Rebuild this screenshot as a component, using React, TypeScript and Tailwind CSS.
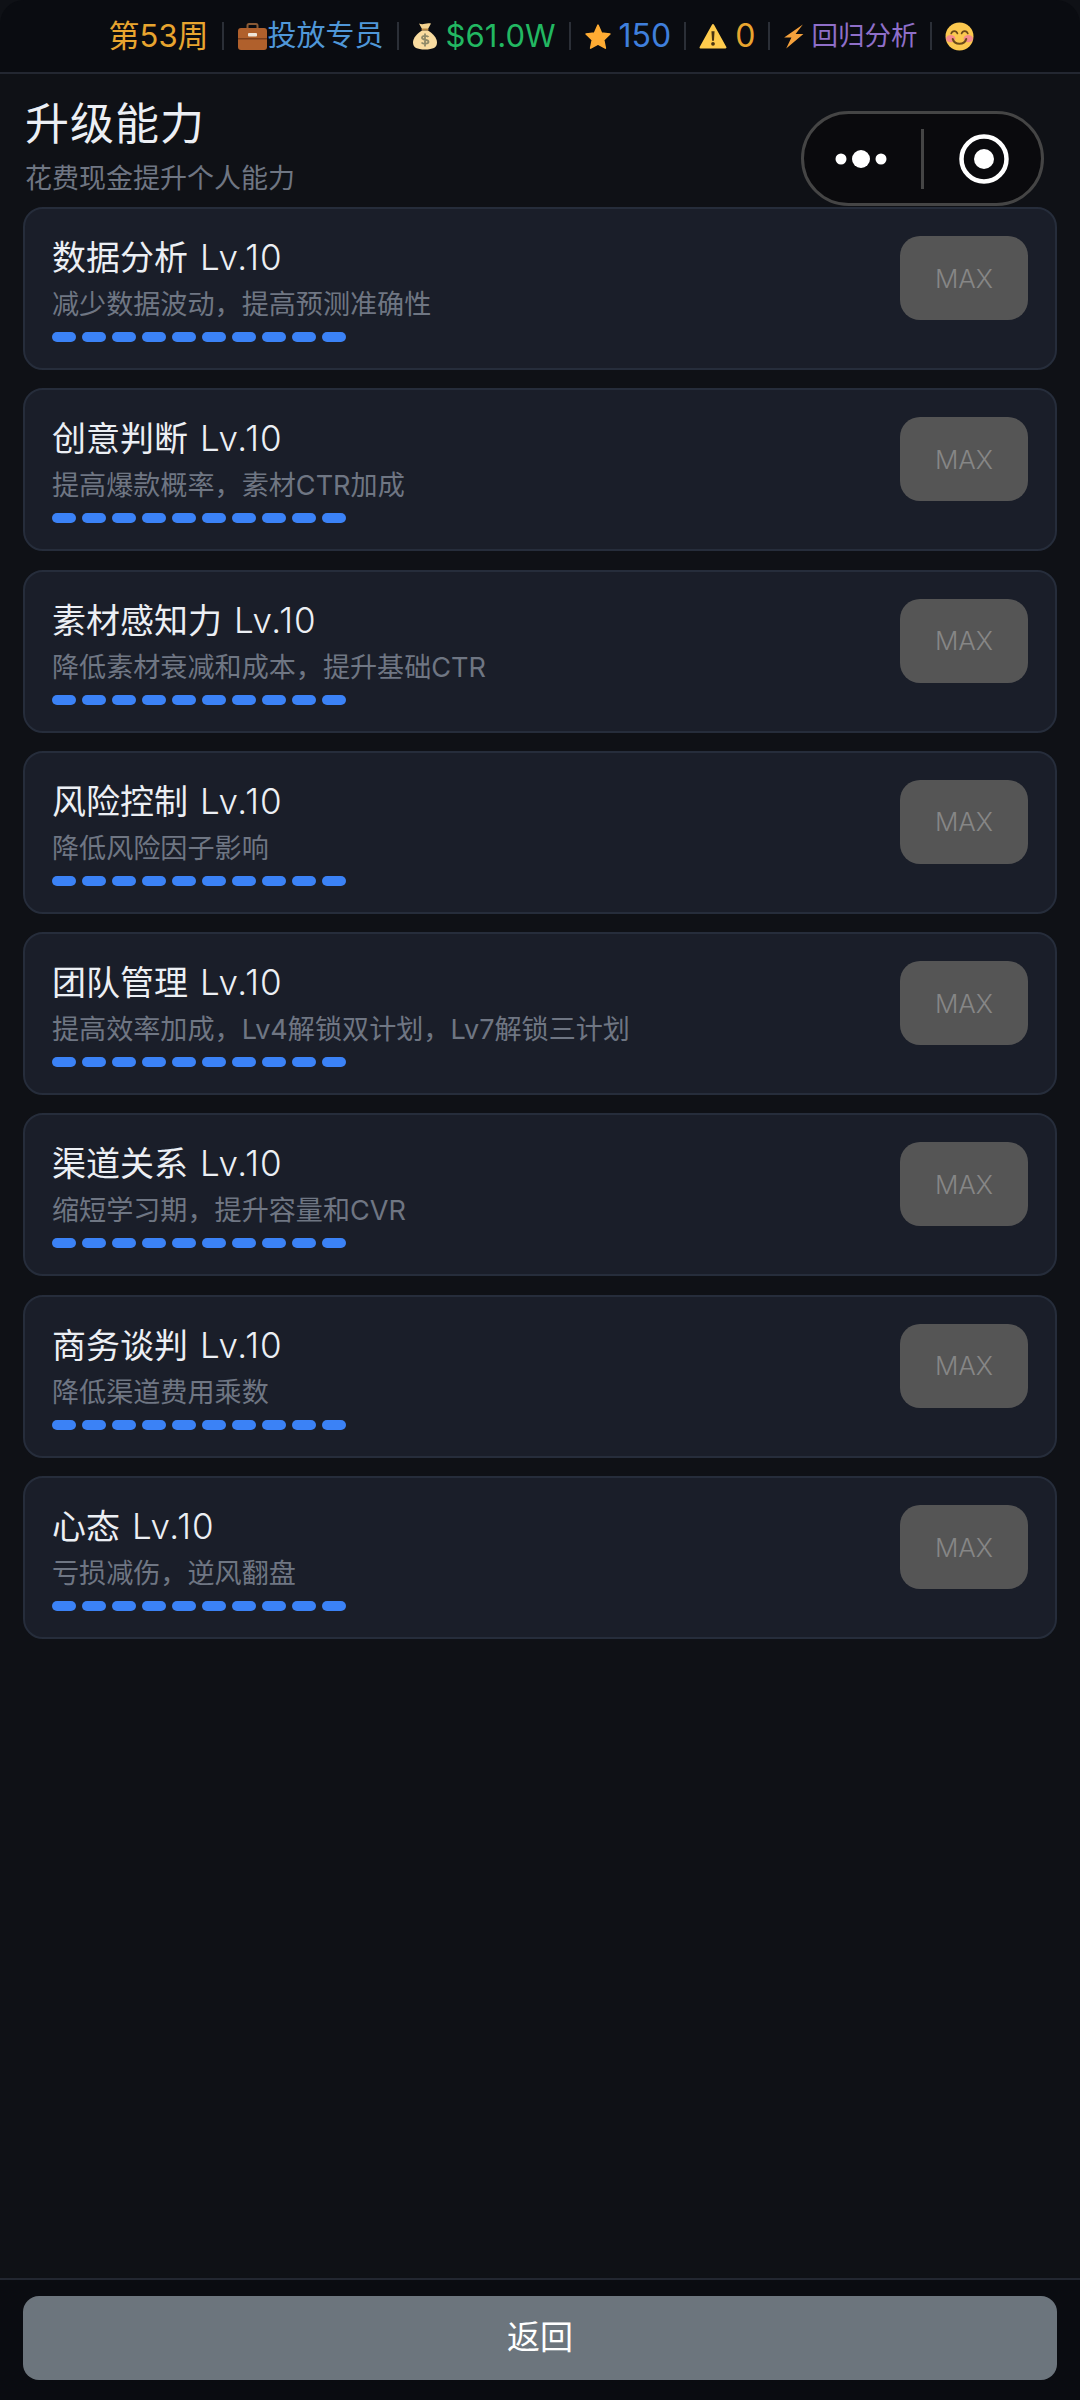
const skills = [
  { name: "数据分析", desc: "减少数据波动，提高预测准确性" },
  { name: "创意判断", desc: "提高爆款概率，素材CTR加成" },
  { name: "素材感知力", desc: "降低素材衰减和成本，提升基础CTR" },
  { name: "风险控制", desc: "降低风险因子影响" },
  { name: "团队管理", desc: "提高效率加成，Lv4解锁双计划，Lv7解锁三计划" },
  { name: "渠道关系", desc: "缩短学习期，提升容量和CVR" },
  { name: "商务谈判", desc: "降低渠道费用乘数" },
  { name: "心态", desc: "亏损减伤，逆风翻盘" },
];

const segments = [0, 1, 2, 3, 4, 5, 6, 7, 8, 9];

function Divider() {
  return <span className="h-[28px] w-[2px] shrink-0 bg-[#2b2f37]" />;
}

function Briefcase() {
  return (
    <svg width="31" height="30" viewBox="0 0 30 30" className="shrink-0">
      <path d="M10 8V4.500A1.500 1.500 0 0 1 11.500 3h7A1.500 1.500 0 0 1 20 4.500V8" fill="none" stroke="#8a5a35" strokeWidth="2" />
      <rect x="0.500" y="7" width="29" height="22" rx="3" fill="#b0602c" />
      <rect x="0.500" y="17" width="29" height="1.500" fill="#7c3f1c" />
      <rect x="10.500" y="12" width="9" height="3.500" rx="1" fill="#efe6da" />
    </svg>
  );
}

function MoneyBag() {
  return (
    <svg width="26" height="28" viewBox="0 0 26 28" className="shrink-0">
      <path d="M7 1.500c2 1 4 1 6 .3 2-.7 4-.7 6-.3l-3 5.500h-6z" fill="#f5d490" />
      <rect x="9.500" y="6.500" width="7" height="2" rx="1" fill="#b5853f" />
      <path d="M10 8.500h6C21 11.500 25 16 25 20.500c0 5-4 7-12 7s-12-2-12-7C1 16 5 11.500 10 8.500z" fill="#f9dca0" />
      <path d="M16.500 15c-1-1.500-6.500-1.700-6.500.8 0 2.700 6.500 1.200 6.500 4 0 2.500-5.500 2.400-7 .7M13 11.500v13" fill="none" stroke="#8f8a68" strokeWidth="1.800" />
    </svg>
  );
}

function Star() {
  return (
    <svg width="28" height="27" viewBox="0 0 27 26" className="shrink-0">
      <path
        d="M13.500 2l3.400 7.600 8.100 1-6 5.600 1.600 8-7.100-4-7.100 4 1.600-8-6-5.600 8.100-1z"
        fill="#ffac33"
        stroke="#ffac33"
        strokeWidth="1.500"
        strokeLinejoin="round"
      />
    </svg>
  );
}

function Warning() {
  return (
    <svg width="28" height="26" viewBox="0 0 27 25" className="shrink-0">
      <path d="M13.500 2L25.500 23.500H1.500z" fill="#ffcc4d" stroke="#ffcc4d" strokeLinejoin="round" strokeWidth="2" />
      <path d="M12 8h3l-.6 9h-1.800z" fill="#4a3512" />
      <circle cx="13.500" cy="20" r="1.800" fill="#4a3512" />
    </svg>
  );
}

function Bolt() {
  return (
    <svg width="21" height="25" viewBox="0 0 20 24" className="shrink-0">
      <path d="M19 0.500L1 13h7L3 23.500 19.500 9.500H12z" fill="#f5a13c" />
    </svg>
  );
}

function Smiley() {
  return (
    <svg width="29" height="29" viewBox="0 0 28 28" className="shrink-0">
      <circle cx="14" cy="14" r="13.500" fill="#fbc84f" />
      <ellipse cx="5.500" cy="16" rx="4.500" ry="3.500" fill="#f58c8c" />
      <ellipse cx="22.500" cy="16" rx="4.500" ry="3.500" fill="#f58c8c" />
      <path d="M6 11c1-3 5-3 6 0M16 11c1-3 5-3 6 0" fill="none" stroke="#6b4a1a" strokeWidth="1.600" strokeLinecap="round" />
      <path d="M7.500 16.500c2 6 11 6 13 0" fill="none" stroke="#6b4a1a" strokeWidth="2" strokeLinecap="round" />
    </svg>
  );
}

function SkillCard({ name, desc }: { name: string; desc: string }) {
  return (
    <div className="flex h-[163px] items-start justify-between rounded-[20px] border-2 border-[#262d3b] bg-[#1a1e29] px-[27px] pt-[26px]">
      <div className="min-w-0">
        <p className="text-[34px] leading-[44px] text-[#eceff4]">
          {name}
          <span className="ml-[12px] text-[35px] font-light tracking-[1px]">Lv.10</span>
        </p>
        <p className="mt-[7px] text-[27.100px] leading-[36px] text-[#6f7683]">{desc}</p>
        <div className="mt-[9px] flex gap-[6px]">
          {segments.map((i) => (
            <span key={i} className="h-[10px] w-[24px] rounded-[5px] bg-[#3b82f6]" />
          ))}
        </div>
      </div>
      <button
        type="button"
        className="mt-[1px] flex h-[84px] w-[128px] shrink-0 items-center justify-center rounded-[20px] bg-[#555555] text-[26px] font-light text-[#868686]"
      >
        MAX
      </button>
    </div>
  );
}

export default function App() {
  return (
    <div
      className="relative flex h-[2400px] w-[1080px] flex-col overflow-hidden bg-[#0f1116]"
      style={{ fontFamily: '"Inter", "Noto Sans CJK SC", sans-serif' }}
    >
      <header className="flex h-[74px] shrink-0 items-center justify-center gap-[13px] rounded-t-[24px] border-b-2 border-[#232731] bg-[#0a0c11] pl-[3px] text-[29px]">
        <span className="text-[31px] text-[#e8a52f]">第53周</span>
        <Divider />
        <span className="flex items-center text-[#4f97d8]">
          <Briefcase />
          投放专员
        </span>
        <Divider />
        <span className="flex items-center gap-[8px] text-[31px] text-[#22b862]">
          <MoneyBag />
          $61.0W
        </span>
        <Divider />
        <span className="flex items-center gap-[7px] text-[32px] text-[#3f7fdc]">
          <Star />
          150
        </span>
        <Divider />
        <span className="flex items-center gap-[8px] text-[32px] text-[#e8a52f]">
          <Warning />0
        </span>
        <Divider />
        <span className="flex items-center gap-[7px] text-[26.500px] text-[#8f6fc9]">
          <Bolt />
          回归分析
        </span>
        <Divider />
        <Smiley />
      </header>

      <div className="shrink-0 pl-[25px] pt-[22px]">
        <h1 className="text-[44px] font-normal leading-[56px] tracking-[1px] text-[#eceff4]">升级能力</h1>
        <p className="mt-[9px] text-[27px] leading-[36px] text-[#6f7683]">花费现金提升个人能力</p>
      </div>

      <div className="absolute left-[801px] top-[111px] flex h-[95px] w-[243px] items-center rounded-full border-[3px] border-[#454545] bg-[#0a0a0d]">
        <svg width="237" height="89" viewBox="0 0 237 89">
          <circle cx="37" cy="45" r="5.500" fill="#fff" />
          <circle cx="57" cy="45" r="9" fill="#fff" />
          <circle cx="77" cy="45" r="5.500" fill="#fff" />
          <rect x="117" y="15" width="3" height="60" fill="#454545" />
          <circle cx="180" cy="45" r="22.500" fill="none" stroke="#fff" strokeWidth="4.500" />
          <circle cx="180" cy="45" r="10" fill="#fff" />
        </svg>
      </div>

      <main className="flex min-h-0 flex-1 flex-col gap-[18.300px] px-[23px] pt-[10px]">
        {skills.map((skill) => (
          <SkillCard key={skill.name} name={skill.name} desc={skill.desc} />
        ))}
      </main>

      <footer className="flex h-[122px] shrink-0 flex-col border-t-2 border-[#232731] bg-[#0a0c11] px-[23px] pt-[16px]">
        <button
          type="button"
          className="flex h-[84px] w-full items-center justify-center rounded-[16px] bg-[#6c757d] text-[33px] text-white"
        >
          返回
        </button>
      </footer>
    </div>
  );
}
